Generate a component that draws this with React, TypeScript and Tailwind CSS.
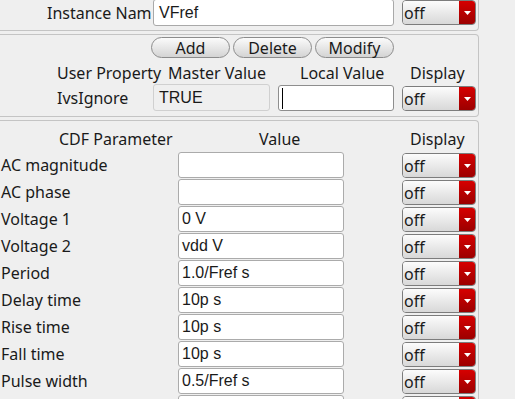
import React from "react";

const params = [
  { label: "AC magnitude", value: "" },
  { label: "AC phase", value: "" },
  { label: "Voltage 1", value: "0 V" },
  { label: "Voltage 2", value: "vdd V" },
  { label: "Period", value: "1.0/Fref s" },
  { label: "Delay time", value: "10p s" },
  { label: "Rise time", value: "10p s" },
  { label: "Fall time", value: "10p s" },
  { label: "Pulse width", value: "0.5/Fref s" },
  { label: "", value: "" },
];

function Cyclic({ className = "" }: { className?: string }) {
  return (
    <div className={`flex w-[74px] h-[25px] shrink-0 rounded-[4px] border border-[#7c7c7c] overflow-hidden ${className}`}>
      <div className="flex-1 flex items-center pl-[1px] leading-none bg-linear-to-b from-[#fcfcfc] to-[#d8d8d8]">off</div>
      <div className="w-[16px] flex items-center justify-center bg-linear-to-b from-[#d60000] to-[#9c0000]">
        <svg width="7" height="4" viewBox="0 0 7 4">
          <path d="M0 0h7L3.5 4z" fill="#ffffff" />
        </svg>
      </div>
    </div>
  );
}

export default function App() {
  return (
    <div className="w-[515px] h-[399px] overflow-hidden flex flex-col bg-[#efefef] text-[#1a1a1a] text-[16px] font-['Noto_Sans',sans-serif]">
      {/* instance name */}
      <div className="w-[479px] h-[31px] shrink-0 flex items-start border-b border-r border-[#c4c4c4] rounded-br-[4px]">
        <div className="ml-[47px] w-[106px] h-[26px] flex items-center whitespace-nowrap leading-none">
          Instance Nam
        </div>
        <div className="-mt-[1px] w-[241px] h-[27px] flex items-center pl-[5px] bg-white border border-[#a9a9a9] rounded-[3px] leading-none font-['Liberation_Sans',Arial,sans-serif]">
          VFref
        </div>
        <Cyclic className="ml-[8px]" />
      </div>

      {/* user properties */}
      <div className="mt-[3px] w-[479px] h-[83px] shrink-0 border border-l-0 border-[#c4c4c4] rounded-r-[4px]">
        <div className="flex gap-[3px] ml-[151px] mt-[2px]">
          {["Add", "Delete", "Modify"].map((b) => (
            <button
              key={b}
              className="w-[79px] h-[21px] flex items-center justify-center leading-none rounded-full border border-[#8c8c8c] bg-linear-to-b from-[#fbfbfb] to-[#d4d4d4]"
            >
              {b}
            </button>
          ))}
        </div>
        <div className="flex items-center h-[18px] mt-[6px] leading-none whitespace-nowrap">
          <span className="ml-[57px] w-[111px]">User Property</span>
          <span className="w-[132px]">Master Value</span>
          <span className="w-[110px]">Local Value</span>
          <span>Display</span>
        </div>
        <div className="flex items-start mt-[2px]">
          <div className="ml-[57px] w-[96px] h-[27px] flex items-center leading-none">IvsIgnore</div>
          <div className="w-[117px] h-[27px] flex items-center pl-[5px] bg-[#efefef] border border-[#d0d0d0] rounded-[3px] leading-none font-['Liberation_Sans',Arial,sans-serif]">
            TRUE
          </div>
          <div className="ml-[8px] mt-[1px] w-[116px] h-[26px] flex items-center pl-[3px] bg-white border border-[#8e8e8e] rounded-[3px]">
            <span className="w-[1px] h-[21px] bg-black" />
          </div>
          <Cyclic className="ml-[8px] mt-[2px]" />
        </div>
      </div>

      {/* cdf parameters */}
      <div className="mt-[3px] w-[479px] flex-1 border border-l-0 border-b-0 border-[#c4c4c4] rounded-tr-[4px]">
        <div className="flex items-center h-[18px] mt-[9px] leading-none whitespace-nowrap">
          <span className="ml-[59px] w-[200px]">CDF Parameter</span>
          <span className="w-[151px]">Value</span>
          <span>Display</span>
        </div>
        <div className="flex flex-col gap-[1px] mt-[4px]">
          {params.map((p, i) => (
            <div key={i} className="flex items-start">
              <div className="w-[178px] h-[26px] flex items-center pl-[1px] overflow-hidden whitespace-nowrap leading-none">
                {p.label}
              </div>
              <div className="w-[166px] h-[26px] flex items-center pl-[3px] bg-white border border-[#ababab] rounded-[3px] leading-none font-['Liberation_Sans',Arial,sans-serif]">
                {p.value}
              </div>
              <Cyclic className="ml-[58px] mt-[1px]" />
            </div>
          ))}
        </div>
      </div>
    </div>
  );
}
